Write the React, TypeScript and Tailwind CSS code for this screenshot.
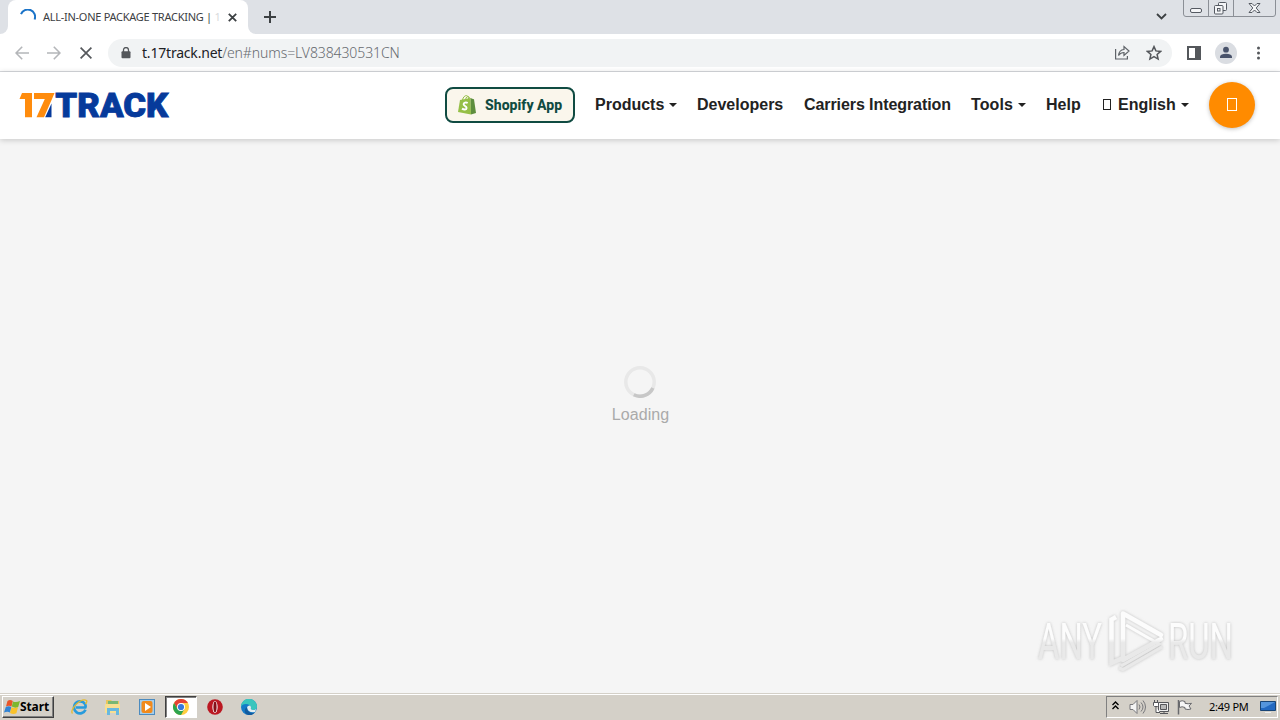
import type { ReactNode } from 'react';

function Caret() {
  return <span className="ml-[5px] mt-px inline-block h-0 w-0 border-x-4 border-t-4 border-x-transparent border-t-[#222]" />;
}

function NavItem({ children, className = '' }: { children: ReactNode; className?: string }) {
  return <a className={`flex shrink-0 items-center whitespace-nowrap ${className}`}>{children}</a>;
}

function TabStrip() {
  return (
    <div className="flex h-[34px] items-start bg-[#dee1e6]">
      <div className="flex h-[34px] w-2 shrink-0 items-end bg-white">
        <div className="h-full w-2 rounded-br-lg bg-[#dee1e6]" />
      </div>
      <div className="flex h-[34px] w-[240px] shrink-0 items-center rounded-t-lg bg-white pl-3">
        <svg className="h-4 w-4 shrink-0" viewBox="0 0 16 16" fill="none">
          <path d="M1 5.200A7 7 0 0 1 14.600 10.500" stroke="#1a73c8" strokeWidth="2" />
        </svg>
        <div className="ml-[7px] w-[178px] shrink-0 whitespace-nowrap font-['Noto_Sans',sans-serif] text-[11px] tracking-[-0.27px] text-[#3c4043]">
          ALL-IN-ONE PACKAGE TRACKING | <span className="text-[#d8dadc]">1</span>
        </div>
        <svg className="ml-[7px] h-[9px] w-[9px] shrink-0" viewBox="0 0 9 9">
          <path d="M.8.8l7.4 7.4M8.2.8L.8 8.2" stroke="#3c4043" strokeWidth="1.800" />
        </svg>
      </div>
      <div className="flex h-[34px] w-2 shrink-0 bg-white">
        <div className="h-full w-2 rounded-bl-lg bg-[#dee1e6]" />
      </div>
      <svg className="ml-2 mt-[11px] h-3 w-3" viewBox="0 0 12 12">
        <path d="M6 0v12M0 6h12" stroke="#3c4043" strokeWidth="2" />
      </svg>
      <svg className="ml-auto mt-[13px] h-[7px] w-[11px]" viewBox="0 0 11 7" fill="none">
        <path d="M1 1l4.500 4.500L10 1" stroke="#3c4043" strokeWidth="1.800" />
      </svg>
      <svg className="ml-4 mr-[3px] h-[18px] w-[94px]" viewBox="0 0 94 18" fill="none">
        <path d="M.5 0v14q0 2.500 2.500 2.500H90q2.500 0 2.500-2.500V0M25.500 0v16M50.500 0v16" stroke="#8b8f96" />
        <rect x="7.500" y="8.500" width="11" height="4" rx="1.500" fill="#f4f5f7" stroke="#555a62" />
        <rect x="35.500" y="2.500" width="8" height="8" rx="1" fill="#f4f5f7" stroke="#555a62" />
        <rect x="31.500" y="5.500" width="8.500" height="8.500" rx="1" fill="#f4f5f7" stroke="#555a62" />
        <rect x="34.500" y="8.500" width="2.500" height="2.500" stroke="#555a62" />
        <path d="M66 3.500h3l2.500 2.500L74 3.500h3L73.200 8l3.800 4.500h-3L71.500 10 69 12.500h-3L69.800 8z" fill="#f4f5f7" stroke="#555a62" />
      </svg>
    </div>
  );
}

function Toolbar() {
  return (
    <div className="flex h-[38px] items-center border-b border-[#d8dade] bg-white pl-[15px]">
      <svg className="h-[14px] w-[14px]" viewBox="0 0 14 14" fill="none" stroke="#b4b6b9" strokeWidth="1.600">
        <path d="M14 7H1.200M7.200.7L1 7l6.200 6.300" />
      </svg>
      <svg className="ml-[18px] h-[14px] w-[14px]" viewBox="0 0 14 14" fill="none" stroke="#b4b6b9" strokeWidth="1.600">
        <path d="M0 7h12.800M6.800.7L13 7l-6.200 6.300" />
      </svg>
      <svg className="ml-[19px] h-3 w-3" viewBox="0 0 12 12" stroke="#55585c" strokeWidth="1.700">
        <path d="M.6.6l10.800 10.800M11.400.6L.6 11.400" />
      </svg>
      <div className="ml-4 flex h-7 w-[1064px] items-center rounded-full bg-[#f1f3f4] pl-[13px] pr-[10px]">
        <svg className="h-3 w-[10px]" viewBox="0 0 10 12">
          <rect x=".5" y="4.200" width="9" height="7" rx="1" fill="#54575b" />
          <path d="M2.500 5V3a2.500 2.500 0 0 1 5 0v2" fill="none" stroke="#54575b" strokeWidth="1.300" />
        </svg>
        <span className="ml-[11px] whitespace-nowrap font-['Noto_Sans',sans-serif] text-[14px] font-light tracking-[-0.1px] text-[#666a6f]">
          <span className="font-normal tracking-[-0.2px] text-[#202124]">t.17track.net</span>/en#nums=LV838430531CN
        </span>
        <svg className="ml-auto h-[15px] w-4" viewBox="0 0 16 15" fill="none" stroke="#5f6368" strokeWidth="1.200">
          <path d="M1.600 4v10h11.800v-3" />
          <path d="M4.500 10.500Q5 5 10 4.500V1.500l5 4.500-5 4.500v-3Q6.500 7.500 4.500 10.500z" />
        </svg>
        <svg className="ml-4 h-4 w-4" viewBox="0 0 16 16" fill="none" stroke="#54575b" strokeWidth="1.500">
          <path d="M8 1.600l1.900 4.300 4.700.5-3.500 3.100 1 4.600L8 11.700l-4.100 2.400 1-4.600-3.500-3.100 4.700-.5z" />
        </svg>
      </div>
      <svg className="ml-[15px] h-[14px] w-[14px]" viewBox="0 0 14 14">
        <path d="M0 0h14v14H0zM2 2v10h6V2z" fill="#54575b" fillRule="evenodd" />
      </svg>
      <svg className="ml-[14px] h-[22px] w-[22px]" viewBox="0 0 22 22">
        <circle cx="11" cy="11" r="11" fill="#dadde2" />
        <circle cx="11" cy="7.700" r="2.900" fill="#49536b" />
        <path d="M5 16v-1.500Q5.800 11.800 11 11.800T17 14.500V16z" fill="#49536b" />
      </svg>
      <svg className="ml-[20px] h-[14px] w-[3px]" viewBox="0 0 3 14" fill="#54575b">
        <circle cx="1.500" cy="2" r="1.500" /><circle cx="1.500" cy="7" r="1.500" /><circle cx="1.500" cy="12" r="1.500" />
      </svg>
    </div>
  );
}

function Header() {
  return (
    <header className="z-10 flex h-[67px] shrink-0 items-center bg-white pb-[2px] pl-5 pr-[25px] font-['Liberation_Sans',sans-serif] text-[16px] font-bold text-[#222] shadow-[0_1px_6px_rgba(0,0,0,0.2)]">
      <svg className="h-[26px] w-[149px] overflow-visible" viewBox="0 0 149 26">
        <path d="M31.500 11.500V25.200H25.200z" fill="#063a9b" />
        <path d="M2 1h10v24.200H5V7H-.5zM14 1h20.500l-2.500 6L24 25.200H16.500L24.800 7H14z" fill="#ff8c0d" />
        <text x="35.300" y="24.700" textLength="113" lengthAdjust="spacingAndGlyphs" fontFamily="Roboto, sans-serif" fontWeight="900" fontSize="32.500" fill="#063a9b" stroke="#063a9b" strokeWidth=".8">TRACK</text>
      </svg>
      <a className="ml-auto flex h-9 w-[130px] items-center rounded-lg border-2 border-[#104b42] bg-[#faf6ec] pl-[11px] font-['Roboto',sans-serif] text-[14px] font-extrabold text-[#104b42]">
        <svg className="h-5 w-[18px] shrink-0" viewBox="0 0 18 20">
          <path d="M2 5L12.500 3 13 19.500 0 17z" fill="#95bf47" />
          <path d="M12.500 3l2.500 1 1 .3 2 13.700-5 1.500z" fill="#5e8e3e" />
          <path d="M4.500 5C5 2 7 .5 8.500.6s2 1.400 2.200 3.500M7.600 4.500C7.900 2.200 9.500 1.200 10.500 1.700s1.500 1.300 1.600 2" fill="none" stroke="#95bf47" />
          <path d="M9.700 8C8 7 5.500 7.500 5.600 9.300c.1 1.700 3 1.700 3 3.700 0 1.800-2.600 2-4.600.6" fill="none" stroke="#fff" strokeWidth="1.900" />
        </svg>
        <span className="ml-[9px] whitespace-nowrap leading-6 tracking-[0.04px]">Shopify App</span>
      </a>
      <nav className="flex items-center">
        <NavItem className="ml-5 w-[82px]">Products<Caret /></NavItem>
        <NavItem className="ml-5 w-[87px]">Developers</NavItem>
        <NavItem className="ml-5 w-[147px] tracking-[-0.08px]">Carriers Integration</NavItem>
        <NavItem className="ml-5 w-[55px] tracking-[0.1px]">Tools<Caret /></NavItem>
        <NavItem className="ml-5 w-[35px]">Help</NavItem>
        <NavItem className="ml-[22px] w-[86px]">
          <span className="mr-[7px] h-[11px] w-2 shrink-0 border border-[#222]" />English<Caret />
        </NavItem>
      </nav>
      <button className="ml-5 flex h-[46px] w-[46px] shrink-0 items-center justify-center rounded-full bg-[#ff8b00] shadow-[0_1px_4px_rgba(0,0,0,0.25)]">
        <span className="h-[13px] w-[10px] border border-white" />
      </button>
    </header>
  );
}

function Watermark() {
  return (
    <svg className="absolute bottom-[19px] right-[36px] h-[68px] w-[210px] overflow-visible" viewBox="0 0 210 68">
      <defs>
        <linearGradient id="fade" gradientUnits="userSpaceOnUse" x1="0" y1="0" x2="0" y2="68">
          <stop offset="0.48" stopColor="#fcfcfc" /><stop offset="0.54" stopColor="#e9e9e9" />
        </linearGradient>
        <filter id="glow" x="-10%" y="-10%" width="120%" height="120%">
          <feDropShadow dx="0" dy="0" stdDeviation="1.400" floodColor="#999" floodOpacity="0.600" />
        </filter>
      </defs>
      <g filter="url(#glow)" fill="url(#fade)" fontFamily="Roboto, sans-serif" fontSize="50">
        <text x="4" y="52.500" textLength="64" lengthAdjust="spacingAndGlyphs">ANY</text>
        <text x="134" y="52.500" textLength="65" lengthAdjust="spacingAndGlyphs">RUN</text>
        <g fill="none" stroke="url(#fade)" strokeWidth="4.500">
          <path d="M127 29L89 7.500V54L127 33" strokeLinejoin="round" strokeLinecap="round" />
          <path d="M82 11l-4.500 2.500V57L89 52" />
          <path d="M92 19l33 19-38 22" strokeWidth="3" />
          <path d="M85 62l4 1.500L128 41" strokeWidth="3" />
        </g>
      </g>
    </svg>
  );
}

function Taskbar() {
  return (
    <footer className="flex h-[27px] items-center border-t border-[#d4d0c8] bg-[#d4d0c8] px-0.5 shadow-[inset_0_1px_0_#fff]">
      <button className="flex h-[22px] w-[52px] shrink-0 items-center border border-b-[#404040] border-l-white border-r-[#404040] border-t-white font-['Noto_Sans',sans-serif] text-[12px] font-bold tracking-[-0.1px] text-black shadow-[inset_-1px_-1px_0_#808080]">
        <svg className="ml-px h-4 w-4 shrink-0" viewBox="0 0 16 16">
          <path d="M3.500 2Q6 .1 8.800 2L7.500 7.500Q5 5.800 2 7.500z" fill="#e95528" />
          <path d="M9 2.500q3 1.300 7-.5L14.200 8Q11 9.500 7.800 7.500z" fill="#7db72f" />
          <path d="M1.800 8q3-1.500 5.500 0L6 13.500q-2.500-1.600-6 0z" fill="#3183d4" />
          <path d="M7.500 8.300q3 1.500 6.500-.1l-1.600 6q-3 1.700-6.400-.2z" fill="#fac22b" />
        </svg>
        <span>Start</span>
      </button>
      <svg className="ml-[17px] h-4 w-[17px]" viewBox="0 0 17 16" fill="none">
        <path d="M14.500 10.800A6 6 0 1 1 14 5Q15 7 14.300 8.500H5" stroke="#279bdc" strokeWidth="2.700" />
        <path d="M1.500 14.500C-2 11 10-2 15.500 1.500q1 1-1 3.500" stroke="#e5ba2e" strokeWidth="1.300" />
      </svg>
      <svg className="ml-[17px] h-4 w-4" viewBox="0 0 16 16">
        <path d="M1 1h5l1 1h7v10H1z" fill="#e8c65d" /><path d="M3 2h10v4H3z" fill="#78b773" />
        <path d="M0 5h15v9H0z" fill="#f7df92" /><path d="M2 16V9h12v7h-3v-4H5v4z" fill="#68b8df" />
      </svg>
      <svg className="ml-[18px] h-4 w-4" viewBox="0 0 16 16">
        <rect x=".5" y=".5" width="15" height="15" fill="#a5cdea" stroke="#4c8bbf" />
        <rect x="2.500" y="2" width="11" height="12" rx="2" fill="#f18a1c" /><path d="M6 4l6 4-6 4z" fill="#fff" />
      </svg>
      <div className="ml-[10px] flex h-[22px] w-8 items-center justify-center border border-b-white border-l-[#404040] border-r-white border-t-[#404040] bg-white shadow-[inset_1px_1px_0_#808080]">
        <svg className="h-4 w-4" viewBox="0 0 16 16">
          <circle cx="8" cy="8" r="8" fill="#ffcd40" />
          <path d="M1.070 4A8 8 0 0 1 14.930 4H8L4.540 10z" fill="#e64235" />
          <path d="M1.070 4A8 8 0 0 0 8 16l3.460-6H4.540z" fill="#2da44e" />
          <circle cx="8" cy="8" r="4" fill="#fff" /><circle cx="8" cy="8" r="3.100" fill="#3879dc" />
        </svg>
      </div>
      <svg className="ml-[10px] h-4 w-4" viewBox="0 0 16 16">
        <circle cx="8" cy="8" r="7.800" fill="#bb1822" /><ellipse cx="8" cy="8" rx="2.600" ry="6" fill="#fff" /><ellipse cx="8" cy="8" rx="1.600" ry="5.400" fill="#861018" />
      </svg>
      <svg className="ml-[18px] h-4 w-4" viewBox="0 0 16 16">
        <circle cx="8" cy="8" r="8" fill="#147ac8" />
        <path d="M0 8A8 8 0 0 1 16 7.500Q16 11 12 11 9 11 10 8.500 9 5 5 5 1 5 0 8z" fill="#39c5bd" />
        <path d="M6 9q0-2.500 3-2.500 1 .8 1 2-1 2.500 2 2.500 2 0 3.200-1L14 13q-7 1-8-4z" fill="#e3edf0" />
        <path d="M6 8q0 6 6 6 1.500 0 2-.5Q10 18 5 15 2 11 6 8z" fill="#125b9e" />
      </svg>
      <div className="ml-auto flex h-[22px] w-[172px] items-center border border-b-white border-l-[#808080] border-r-white border-t-[#808080] pl-[5px]">
        <svg className="mb-[3px] h-[9px] w-[7px]" viewBox="0 0 7 9" fill="none" stroke="#000" strokeWidth="1.400">
          <path d="M.5 4l3-3 3 3M.5 8l3-3 3 3" />
        </svg>
        <svg className="ml-[10px] h-4 w-[17px]" viewBox="0 0 17 16" fill="none" stroke="#77777b">
          <path d="M1 5.500h3l4-4v13l-4-4H1z" fill="#f4f4f4" /><path d="M10 5.500q2 2.500 0 5M12 3.500q4 4.500 0 9M14 1.500q5 6.500 0 13" />
        </svg>
        <svg className="ml-[7px] h-4 w-[17px]" viewBox="0 0 17 16" fill="none" stroke="#55565a">
          <path d="M5.500 3.500h10v9h-10zM7 14.500h8M11 13v1" fill="#eee" /><path d="M7.500 5.500h6v5h-6z" fill="#b8b8b8" />
          <path d="M.5 3.500h5v3l-1 1h-3l-1-1zM1.500 1v2M4.500 1v2M3 8v5.500h4" fill="#fff" />
        </svg>
        <svg className="ml-[7px] h-4 w-4" viewBox="0 0 16 16" stroke="#68696d">
          <path d="M1.500 1v14.500" strokeWidth="1.500" /><path d="M2.500 2.500Q5 1 8 2.500v1.800q3 1 6.500 0L12 7l2 3q-3 1-6 0V8.500q-3-1.500-5.500 0z" fill="#f6f6f6" />
        </svg>
        <span className="ml-[16px] w-[41px] whitespace-nowrap font-['Noto_Sans',sans-serif] text-[11px] tracking-[-0.25px] text-black">2:49 PM</span>
        <svg className="ml-[10px] h-[14px] w-4 shrink-0" viewBox="0 0 16 14">
          <path d="M.5 1.500h15v9H.5z" fill="#2369c1" stroke="#194576" /><path d="M1 2h14L4 8H1z" fill="#5595dc" /><path d="M5 12.500h6" stroke="#eee" />
        </svg>
      </div>
    </footer>
  );
}

export default function App() {
  return (
    <div className="flex h-[720px] w-[1280px] flex-col overflow-hidden bg-[#f5f5f5]">
      <TabStrip />
      <Toolbar />
      <Header />
      <main className="relative flex flex-1 flex-col items-center bg-[#f5f5f5] pt-[227px]">
        <svg className="h-8 w-8" viewBox="0 0 32 32" fill="none" strokeWidth="3.500">
          <circle cx="16" cy="16" r="14.200" stroke="#e8e8e8" />
          <path d="M28.900 22A14.200 14.200 0 0 1 9.800 28.800" stroke="#c7c7c7" />
        </svg>
        <p className="ml-px mt-[5px] font-['Liberation_Sans',sans-serif] text-[16px] tracking-[0.1px] text-[#aaa]">Loading</p>
        <Watermark />
      </main>
      <Taskbar />
    </div>
  );
}
